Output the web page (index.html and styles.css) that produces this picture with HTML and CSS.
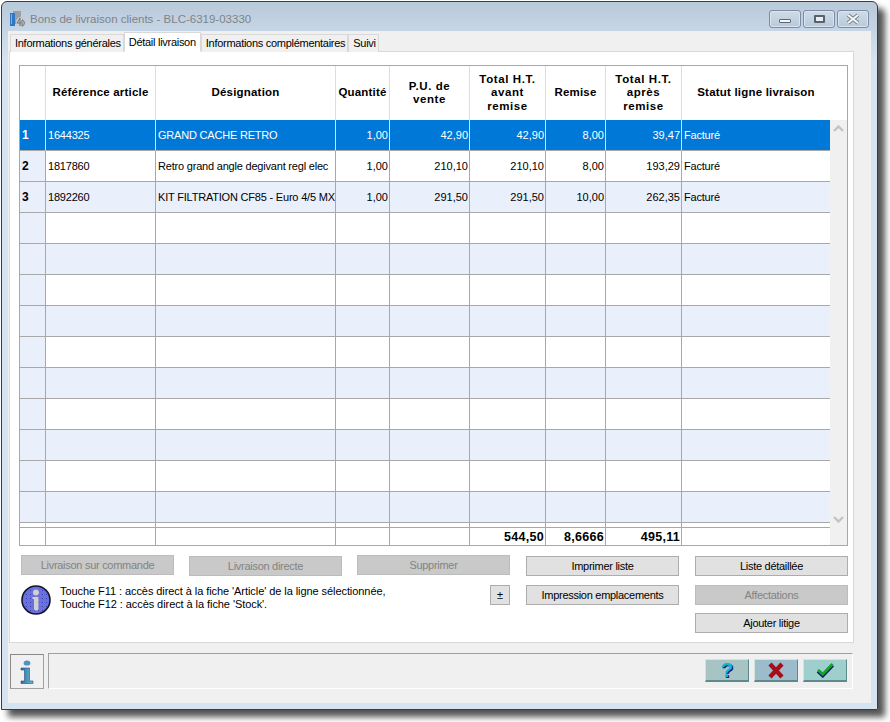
FILE: index.html
```html
<!DOCTYPE html>
<html>

<head>
  <meta charset="utf-8">
  <title>Bons de livraison clients</title>
  <link rel="stylesheet" href="styles.css">
</head>

<body>
  <div class="window">

    <!-- Title bar -->
    <div class="titlebar">
      <svg class="app-icon" width="16" height="16" viewBox="0 0 16 16">
        <rect x="3" y="0" width="8" height="13" fill="#9a9fa6"/>
        <rect x="0" y="2" width="5" height="13" fill="#2f78c4"/>
        <rect x="1" y="3" width="1" height="10" fill="#7fb2e2"/>
        <circle cx="11" cy="11" r="5" fill="#c8ccd0"/>
        <path d="M10 7 L7 12 H11 M10 7 V15 M12 9 V15 M12 9 C15 9 15 15 12 15" fill="none" stroke="#6d7278" stroke-width="1"/>
      </svg>
      <span class="title">Bons de livraison clients - BLC-6319-03330</span>
      <div class="win-buttons">
        <div class="win-btn"><span class="win-min"></span></div>
        <div class="win-btn"><span class="win-max"></span></div>
        <div class="win-btn">
          <svg width="16" height="12" viewBox="0 0 16 12">
            <path d="M3 2 L13 10 M13 2 L3 10" stroke="#77838f" stroke-width="4"/>
            <path d="M3 2 L13 10 M13 2 L3 10" stroke="#f4f6f8" stroke-width="2"/>
          </svg>
        </div>
      </div>
    </div>

    <div class="client">
      <!-- Tabs -->
      <div class="tabs">
        <div class="tab">Informations générales</div>
        <div class="tab active">Détail livraison</div>
        <div class="tab">Informations complémentaires</div>
        <div class="tab">Suivi</div>
      </div>

      <div class="page">
        <!-- Grid -->
        <div class="grid">
          <table>
            <colgroup>
              <col class="c-head"><col class="c-ref"><col class="c-des"><col class="c-qty"><col class="c-pu">
              <col class="c-tot"><col class="c-rem"><col class="c-tot"><col class="c-stat"><col class="c-scroll">
            </colgroup>
            <tr class="head">
              <th></th>
              <th>Référence article</th>
              <th>Désignation</th>
              <th>Quantité</th>
              <th class="wide">P.U. de<br>vente</th>
              <th class="wide">Total H.T.<br>avant<br>remise</th>
              <th>Remise</th>
              <th class="wide">Total H.T.<br>après<br>remise</th>
              <th colspan="2" class="last">Statut ligne livraison</th>
            </tr>
            <tr class="selected">
              <td class="num">1</td><td>1644325</td><td>GRAND CACHE RETRO</td><td class="r">1,00</td><td class="r">42,90</td><td class="r">42,90</td><td class="r">8,00</td><td class="r">39,47</td><td>Facturé</td>
              <td class="scroll" rowspan="15">
                <div class="scroll-inner">
                  <svg width="13" height="9" viewBox="0 0 13 9"><path d="M2 7 L6.5 2.5 L11 7" fill="none" stroke="#c4c4c4" stroke-width="2.4"/></svg>
                  <svg width="13" height="9" viewBox="0 0 13 9"><path d="M2 2 L6.5 6.5 L11 2" fill="none" stroke="#c4c4c4" stroke-width="2.4"/></svg>
                </div>
              </td>
            </tr>
            <tr>
              <td class="num">2</td><td>1817860</td><td>Retro grand angle degivant regl elec</td><td class="r">1,00</td><td class="r">210,10</td><td class="r">210,10</td><td class="r">8,00</td><td class="r">193,29</td><td>Facturé</td>
            </tr>
            <tr class="alt">
              <td class="num">3</td><td>1892260</td><td>KIT FILTRATION CF85 - Euro 4/5 MX</td><td class="r">1,00</td><td class="r">291,50</td><td class="r">291,50</td><td class="r">10,00</td><td class="r">262,35</td><td>Facturé</td>
            </tr>
            <tr><td class="num"></td><td></td><td></td><td></td><td></td><td></td><td></td><td></td><td></td></tr>
            <tr class="alt"><td class="num"></td><td></td><td></td><td></td><td></td><td></td><td></td><td></td><td></td></tr>
            <tr><td class="num"></td><td></td><td></td><td></td><td></td><td></td><td></td><td></td><td></td></tr>
            <tr class="alt"><td class="num"></td><td></td><td></td><td></td><td></td><td></td><td></td><td></td><td></td></tr>
            <tr><td class="num"></td><td></td><td></td><td></td><td></td><td></td><td></td><td></td><td></td></tr>
            <tr class="alt"><td class="num"></td><td></td><td></td><td></td><td></td><td></td><td></td><td></td><td></td></tr>
            <tr><td class="num"></td><td></td><td></td><td></td><td></td><td></td><td></td><td></td><td></td></tr>
            <tr class="alt"><td class="num"></td><td></td><td></td><td></td><td></td><td></td><td></td><td></td><td></td></tr>
            <tr><td class="num"></td><td></td><td></td><td></td><td></td><td></td><td></td><td></td><td></td></tr>
            <tr class="alt"><td class="num"></td><td></td><td></td><td></td><td></td><td></td><td></td><td></td><td></td></tr>
            <tr class="spacer"><td></td><td></td><td></td><td></td><td></td><td></td><td></td><td></td><td></td></tr>
            <tr class="totals">
              <td></td><td></td><td></td><td></td><td></td><td class="r">544,50</td><td class="r">8,6666</td><td class="r">495,11</td><td></td>
            </tr>
          </table>
        </div>

        <!-- Buttons -->
        <div class="actions">
          <div class="btn disabled">Livraison sur commande</div>
          <div class="btn disabled low">Livraison directe</div>
          <div class="btn disabled">Supprimer</div>
          <div class="btn low">Imprimer liste</div>
          <div class="btn low">Liste détaillée</div>

          <div class="info">
            <svg width="30" height="30" viewBox="0 0 30 30">
              <defs>
                <pattern id="dots" width="4" height="4" patternUnits="userSpaceOnUse">
                  <rect x="1" y="1" width="1" height="1" fill="#3a40b4"/>
                </pattern>
              </defs>
              <circle cx="15" cy="15" r="14" fill="#6a70dc" stroke="#15152e" stroke-width="1.6"/>
              <circle cx="15" cy="15" r="13" fill="url(#dots)"/>
              <circle cx="15" cy="7.5" r="3" fill="#d0d0d4"/>
              <path d="M11.5 12 H17.5 V24 C17.5 26 13 26 13 24 V14 H11.5 Z" fill="#cfcfd4"/>
            </svg>
            <p>Touche F11 : accès direct à la fiche 'Article' de la ligne sélectionnée,<br>Touche F12 : accès direct à la fiche 'Stock'.</p>
          </div>
          <div class="btn small">±</div>
          <div class="btn">Impression emplacements</div>
          <div class="btn disabled">Affectations</div>

          <div class="btn col5">Ajouter litige</div>
        </div>
      </div>

      <!-- Bottom bar -->
      <div class="footer">
        <div class="info-btn">
          <svg width="16" height="24" viewBox="0 0 16 24">
            <defs>
              <linearGradient id="stem" x1="0" x2="1" y1="0" y2="0">
                <stop offset="0" stop-color="#2a6c9e"/>
                <stop offset="1" stop-color="#6dbcdc"/>
              </linearGradient>
            </defs>
            <ellipse cx="8" cy="3" rx="3.4" ry="2.6" fill="#4f93c4"/>
            <path d="M2 8 H10.5 V21 H14 V23.5 H2 V21 H5.5 V10 H2 Z" fill="url(#stem)" stroke="#2b4f78" stroke-width="0.6"/>
          </svg>
        </div>
        <div class="status">
          <div class="dlg-btn help"><span>?</span></div>
          <div class="dlg-btn cancel">
            <svg width="18" height="17" viewBox="0 0 18 17">
              <path d="M3 2 L15 15 M15 2 L3 15" stroke="#a80d18" stroke-width="4.4"/>
            </svg>
          </div>
          <div class="dlg-btn ok">
            <svg width="19" height="16" viewBox="0 0 24 18">
              <path d="M2.5 10.5 L8.5 16 L21 3" fill="none" stroke="#10107a" stroke-width="4.6"/>
              <path d="M2.5 9 L8.5 14.5 L21 1.5" fill="none" stroke="#10a820" stroke-width="3.6"/>
            </svg>
          </div>
        </div>
      </div>
    </div>
  </div>
</body>
</html>
```

FILE: styles.css
```css
/* Windows dialog look */
body {
  font-family: "Liberation Sans", Arial, sans-serif;
  font-size: 11px;
  margin: 0;
  min-height: 722px;
  background-color: #fff;
  color: #000;
}

.window {
  width: 877px;
  height: 709px;
  margin: 1px 0 0 1px;
  box-sizing: border-box;
  border: 1px solid #3c3c3c;
  border-radius: 6px 6px 0 0;
  background: linear-gradient(#b8c9da, #d6e4f1 60px);
  box-shadow: 7px 7px 6px #555;
  padding: 0 6px 6px 6px;
  display: flex;
  flex-direction: column;
}

/* Title bar */
.titlebar {
  height: 29px;
  box-sizing: border-box;
  padding-top: 5px;
  display: flex;
  align-items: center;
  flex-shrink: 0;
}

.app-icon {
  margin: 0 4px 0 2px;
}

.title {
  color: #7f8388;
  font-size: 11.5px;
}

.win-buttons {
  margin-left: auto;
  margin-right: 2px;
  display: flex;
  gap: 2px;
}

.win-btn {
  width: 32px;
  height: 18px;
  box-sizing: border-box;
  border: 1px solid #7c8da3;
  border-radius: 3px;
  background: linear-gradient(#cfdbe7, #b9c9da);
  box-shadow: inset 0 0 0 1px #dbe5ef;
  display: flex;
  align-items: center;
  justify-content: center;
}

.win-min {
  width: 10px;
  height: 2px;
  margin-top: 4px;
  background: #f2f4f6;
  border: 1px solid #5c6876;
  border-radius: 1px;
}

.win-max {
  width: 7px;
  height: 4px;
  background: #e8edf2;
  border: 2px solid #56626f;
  border-radius: 1px;
}

/* Client area */
.client {
  flex: 1;
  background-color: #f0f0f0;
  padding-left: 1px;
  display: flex;
  flex-direction: column;
}

.tabs {
  display: flex;
  height: 20px;
  padding-left: 1px;
  margin-top: 1px;
  position: relative;
  z-index: 1;
  margin-bottom: -1px;
  align-items: flex-end;
  letter-spacing: -0.28px;
}

.tab {
  height: 18px;
  line-height: 17px;
  box-sizing: border-box;
  padding: 0 2px 0 4px;
  border: 1px solid #d9d9d9;
  border-bottom: none;
  background-color: #f0f0f0;
  white-space: nowrap;
}

.tab.active {
  height: 20px;
  line-height: 18px;
  background-color: #fff;
  padding: 0 4px;
  border-bottom: 1px solid #fff;
}

.page {
  width: 845px;
  height: 592px;
  box-sizing: border-box;
  background-color: #fff;
  border: 1px solid #d9d9d9;
  padding: 13px 0 0 9px;
}

/* Grid */
.grid {
  width: 829px;
  height: 481px;
  box-sizing: border-box;
  border: 1px solid #a8a8a8;
}

table {
  table-layout: fixed;
  width: 827px;
  border-collapse: separate;
  border-spacing: 0;
}

.c-head { width: 26px; }
.c-ref { width: 110px; }
.c-des { width: 180px; }
.c-qty { width: 54px; }
.c-pu { width: 80px; }
.c-tot { width: 76px; }
.c-rem { width: 60px; }
.c-stat { width: 148px; }
.c-scroll { width: 17px; }

th, td {
  box-sizing: border-box;
  padding: 0;
  overflow: hidden;
  white-space: nowrap;
  border-right: 1px solid #a8a8a8;
}

th {
  height: 54px;
  font-size: 11.5px;
  line-height: 13.5px;
  text-align: center;
  letter-spacing: 0.2px;
  border-right-color: #dedede;
}

th.wide {
  letter-spacing: 0.6px;
}

th.last {
  border-right: none;
  padding-right: 17px;
}

td {
  height: 31px;
  border-bottom: 1px solid #a8a8a8;
  padding-left: 2px;
  letter-spacing: -0.2px;
}

td.r {
  text-align: right;
  padding: 0 1px 0 0;
  letter-spacing: 0;
}

td.num {
  font-weight: bold;
  background-color: #e9f0fc;
  font-size: 12px;
  letter-spacing: 0;
}

tr.alt td {
  background-color: #e9f0fc;
}

tr.selected td {
  background-color: #0078d7;
  color: #fff;
  border-right-color: #cfe3f5;
  border-bottom-color: #a8a8a8;
}

tr.selected td:nth-child(9) {
  border-right: none;
}

td.scroll,
tr.selected td.scroll {
  background-color: #f0f0f0;
  border: none;
  padding: 0;
  height: 425px;
  vertical-align: top;
}

.scroll-inner {
  height: 425px;
  box-sizing: border-box;
  padding: 4px 0 21px 2px;
  display: flex;
  flex-direction: column;
  justify-content: space-between;
}

tr td:nth-child(9) {
  border-right: none;
}

tr.spacer td {
  height: 5px;
}

tr.totals td {
  height: 17px;
  border-bottom: none;
  font-weight: bold;
  font-size: 12.5px;
  letter-spacing: 0.3px;
}

/* Buttons */
.actions {
  display: grid;
  grid-template-columns: 168px 168px 169px 169px 153px;
  grid-template-rows: 30px 28px 20px;
  margin: 9px 0 0 2px;
}

.btn {
  width: 153px;
  height: 20px;
  box-sizing: border-box;
  border: 1px solid #adadad;
  background-color: #e1e1e1;
  text-align: center;
  line-height: 18px;
  white-space: nowrap;
  letter-spacing: -0.28px;
}

.btn.disabled {
  background-color: #c9c9c9;
  border-color: #bcbcbc;
  color: #838383;
}

.btn.low {
  margin-top: 1px;
}

.btn.small {
  width: 20px;
  margin-left: 133px;
}

.btn.col5 {
  grid-column: 5;
}

.info {
  grid-column: 1 / span 2;
  grid-row: 2 / span 2;
  display: flex;
  gap: 9px;
  width: 400px;
}

.info p {
  margin: 0;
  line-height: 13px;
  white-space: nowrap;
  letter-spacing: -0.07px;
}

/* Bottom bar */
.footer {
  display: flex;
  gap: 4px;
  margin: 10px 0 0 1px;
}

.info-btn {
  width: 34px;
  height: 35px;
  margin-top: 1px;
  box-sizing: border-box;
  border: 1px solid #a0a0a0;
  border-top-color: #8a8a8a;
  border-left-color: #8a8a8a;
  background-color: #f0f0f0;
  display: flex;
  align-items: center;
  justify-content: center;
}

.status {
  width: 805px;
  height: 36px;
  box-sizing: border-box;
  border-top: 1px solid #a0a0a0;
  border-left: 1px solid #a0a0a0;
  border-bottom: 1px solid #fff;
  border-right: 1px solid #fff;
  display: flex;
  justify-content: flex-end;
  gap: 5px;
  padding: 5px 5px 0 0;
}

.dlg-btn {
  width: 44px;
  height: 23px;
  box-sizing: border-box;
  border-top: 1px solid #d4e4d8;
  border-left: 1px solid #d4e4d8;
  border-right: 1px solid #5f8a8a;
  border-bottom: 2px solid #5f8a8a;
  display: flex;
  align-items: center;
  justify-content: center;
}

.help {
  background-color: #a6c4c4;
  color: #12b4d0;
  font-family: "Liberation Sans", Arial, sans-serif;
  font-size: 21px;
  font-weight: bold;
  text-shadow: 1px 1px 0 #10107a;
}

.cancel {
  background-color: #9dbccb;
}

.ok {
  background-color: #9fcfcc;
}
```
